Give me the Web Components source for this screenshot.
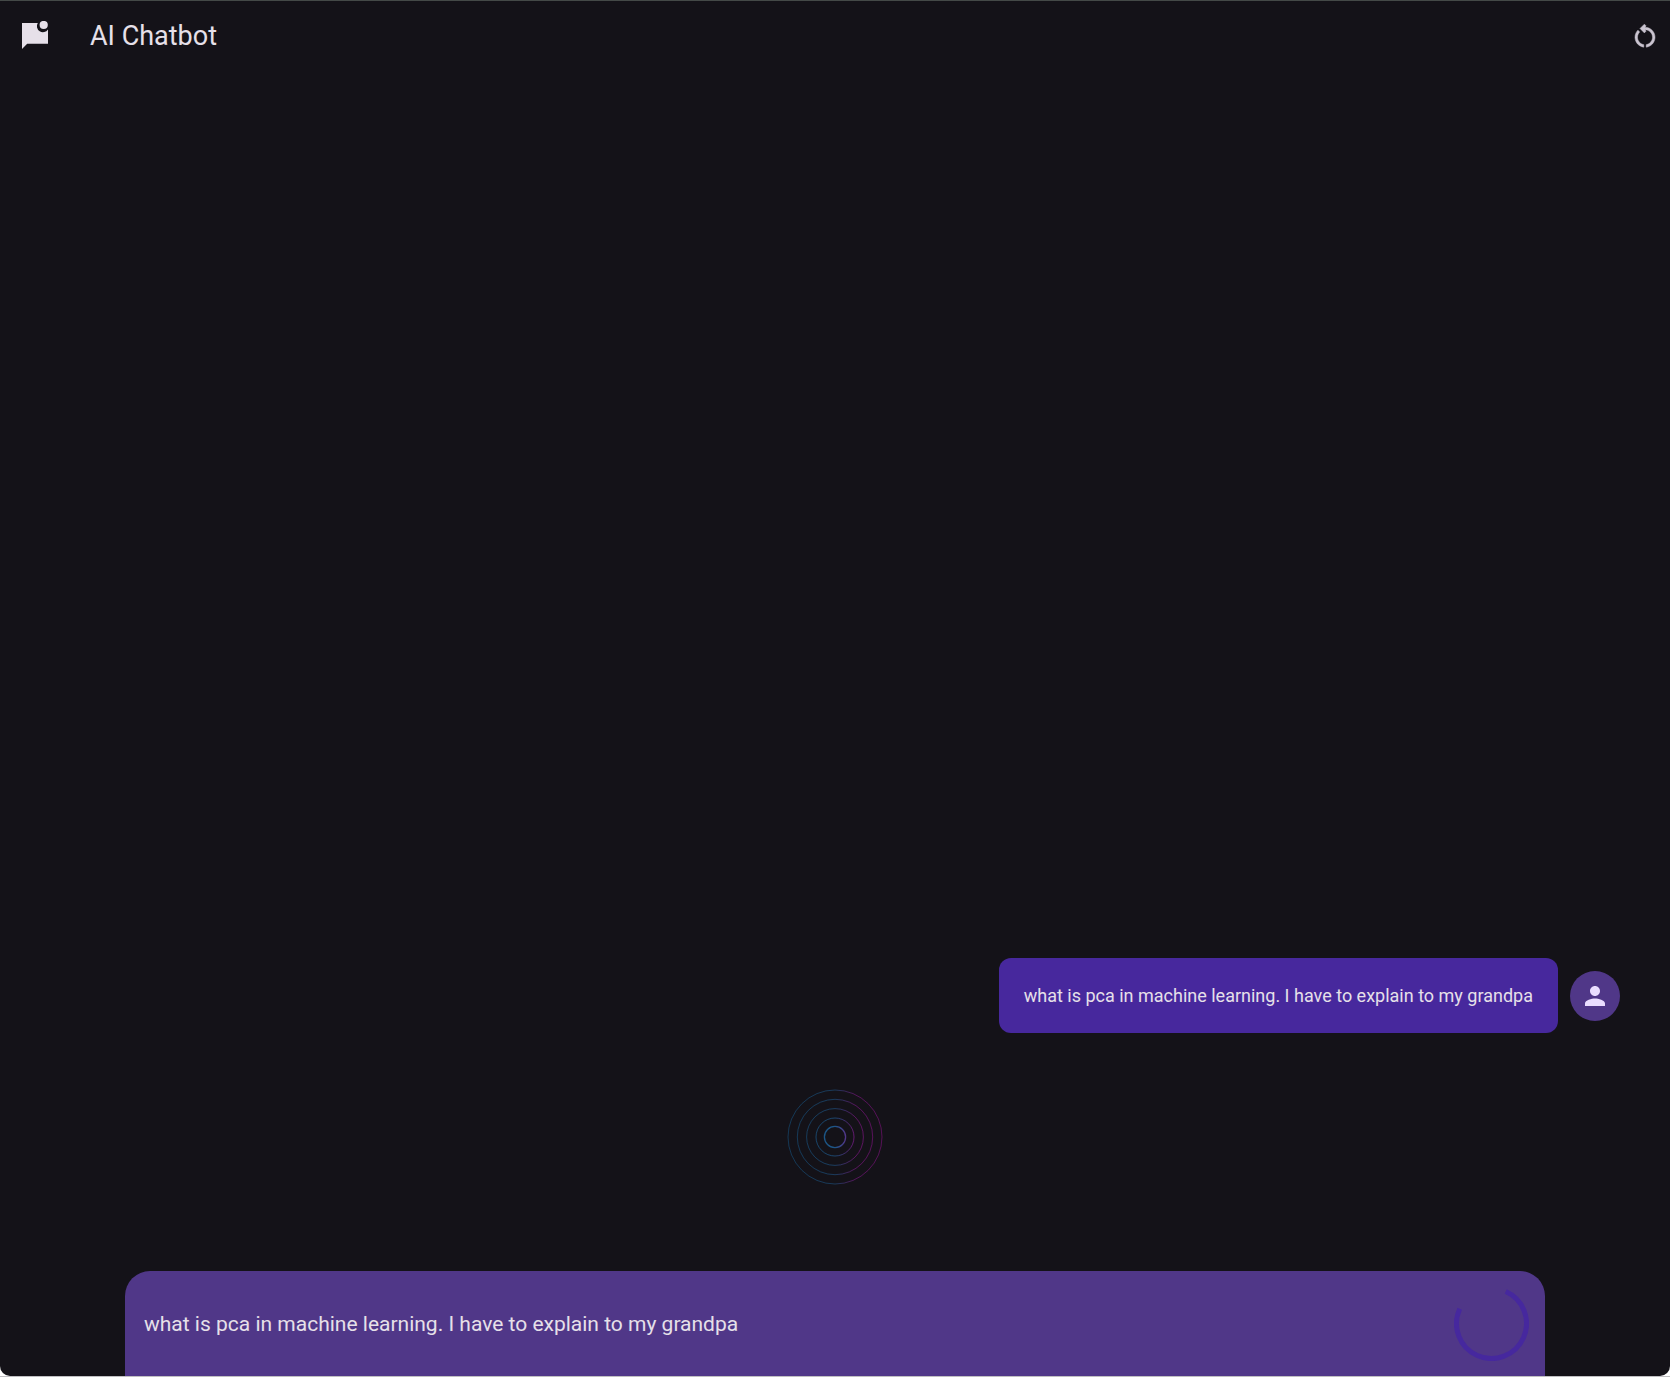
<!DOCTYPE html>
<html lang="en">
<head>
<meta charset="utf-8">
<title>AI Chatbot</title>
<style>
html { height: 100%; background: #fff; }
body { margin: 0; height: 100%; font-family: Roboto, "Liberation Sans", sans-serif; color: #e6e0e9; }
</style>
</head>
<body>
<chat-app>
  <chat-header slot="header">AI Chatbot</chat-header>
  <chat-message>what is pca in machine learning. I have to explain to my grandpa</chat-message>
  <ripple-loader></ripple-loader>
  <chat-composer slot="composer" value="what is pca in machine learning. I have to explain to my grandpa"></chat-composer>
</chat-app>
<script>
function define(name, html, setup) {
  const template = document.createElement('template');
  template.innerHTML = html;
  customElements.define(name, class extends HTMLElement {
    constructor() {
      super();
      this.attachShadow({ mode: 'open' }).append(template.content.cloneNode(true));
    }
    connectedCallback() { if (setup) setup(this); }
  });
}

define('chat-app', `
<style>
:host { display: block; height: 100%; box-sizing: border-box; border-bottom: 1px solid #c0bfc2; background: #fff; }
.window { height: 100%; box-sizing: border-box; display: flex; flex-direction: column; background: #141218;
  border-top: 1px solid #444947; border-radius: 0 0 10px 10px; overflow: hidden; }
main { flex: 1; display: flex; flex-direction: column; justify-content: flex-end; min-height: 0; }
</style>
<div class="window">
  <slot name="header"></slot>
  <main><slot></slot></main>
  <slot name="composer"></slot>
</div>`);

define('chat-header', `
<style>
:host { display: block; }
header { display: flex; align-items: center; height: 70px; padding: 0 10px 0 20px; }
.logo { width: 30px; height: 30px; margin-right: 40px; flex: none; }
h1 { flex: 1; margin: 0; font-size: 27px; line-height: 34px; font-weight: 400; }
button { display: flex; padding: 0; border: 0; background: none; color: #cac4d0; cursor: pointer; }
</style>
<header>
  <svg class="logo" viewBox="0 0 30 30" fill="#e6e0e9" aria-hidden="true">
    <path d="M2 2H17.8A6 6 0 0 0 28 8.4V22.7H7.2L2 28Z"/><circle cx="23.7" cy="4" r="4.1"/>
  </svg>
  <h1><slot></slot></h1>
  <button type="button" aria-label="Restart chat">
    <svg width="30" height="30" viewBox="0 0 24 24" fill="currentColor" stroke="currentColor" stroke-width=".4" aria-hidden="true"><path d="M6 13c0-1.65.67-3.15 1.76-4.24L6.34 7.34C4.9 8.79 4 10.79 4 13c0 4.08 3.05 7.44 7 7.93v-2.02C8.17 18.43 6 15.97 6 13zM20 13c0-4.42-3.58-8-8-8-.06 0-.12.01-.18.01l1.09-1.09L11.5 2.5 8 6l3.5 3.5 1.41-1.41-1.08-1.08C11.89 7.01 11.95 7 12 7c3.31 0 6 2.69 6 6 0 2.97-2.17 5.43-5 5.91v2.02c3.95-.49 7-3.85 7-7.93z"/></svg>
  </button>
</header>`);

define('chat-message', `
<style>
:host { display: flex; justify-content: flex-end; align-items: center; gap: 12px; padding: 0 50px; }
p { margin: 0; padding: 25px; border-radius: 12px; background: #47289d; font-size: 18px; line-height: 25px; }
.avatar { display: flex; align-items: center; justify-content: center; flex: none; width: 50px; height: 50px; border-radius: 50%; background: #503788; }
</style>
<p><slot></slot></p>
<span class="avatar"><svg width="30" height="30" viewBox="0 0 24 24" fill="#eaddff" aria-hidden="true"><path d="M12 12c2.21 0 4-1.79 4-4s-1.79-4-4-4-4 1.79-4 4 1.79 4 4 4zm0 2c-2.67 0-8 1.34-8 4v2h16v-2c0-2.66-5.33-4-8-4z"/></svg></span>`);

define('ripple-loader', `
<style>
:host { display: flex; justify-content: center; padding: 54px 0 84px; }
</style>
<svg width="100" height="100" viewBox="0 0 100 100" fill="none" stroke="url(#tint)" role="img" aria-label="Loading">
  <defs><linearGradient id="tint" gradientUnits="userSpaceOnUse" x1="3" y1="50" x2="97" y2="50">
    <stop offset="0" stop-color="#14629a"/><stop offset=".5" stop-color="#2068a4"/><stop offset=".72" stop-color="#a018a8"/><stop offset="1" stop-color="#a0109c"/>
  </linearGradient></defs>
  <circle cx="50" cy="50" r="47" opacity=".46"/>
  <circle cx="50" cy="50" r="37.7" opacity=".48"/>
  <circle cx="50" cy="50" r="28.4" opacity=".5"/>
  <circle cx="50" cy="50" r="19" opacity=".6"/>
  <circle cx="50" cy="50" r="10.6" stroke-width="1.3" opacity=".8"/>
</svg>`);

define('chat-composer', `
<style>
:host { display: block; padding: 0 125px; }
form { display: flex; align-items: center; gap: 20px; padding: 15px 16px 15px 19px; border-radius: 25px 25px 0 0; background: #503788; }
input { flex: 1; min-width: 0; height: 30px; padding: 0; border: 0; outline: 0; background: none; color: #e6e0e9; font: 400 21px/30px Roboto, "Liberation Sans", sans-serif; }
svg { flex: none; display: block; }
</style>
<form>
  <input type="text" aria-label="Message">
  <svg width="75" height="75" viewBox="0 0 75 75" role="img" aria-label="Sending">
    <circle cx="37.5" cy="37.5" r="35" fill="none" stroke="#46289e" stroke-width="5" pathLength="360" stroke-dasharray="271 89" transform="rotate(-66 37.5 37.5)"/>
  </svg>
</form>`, el => { el.shadowRoot.querySelector('input').value = el.getAttribute('value'); });
</script>
</body>
</html>
